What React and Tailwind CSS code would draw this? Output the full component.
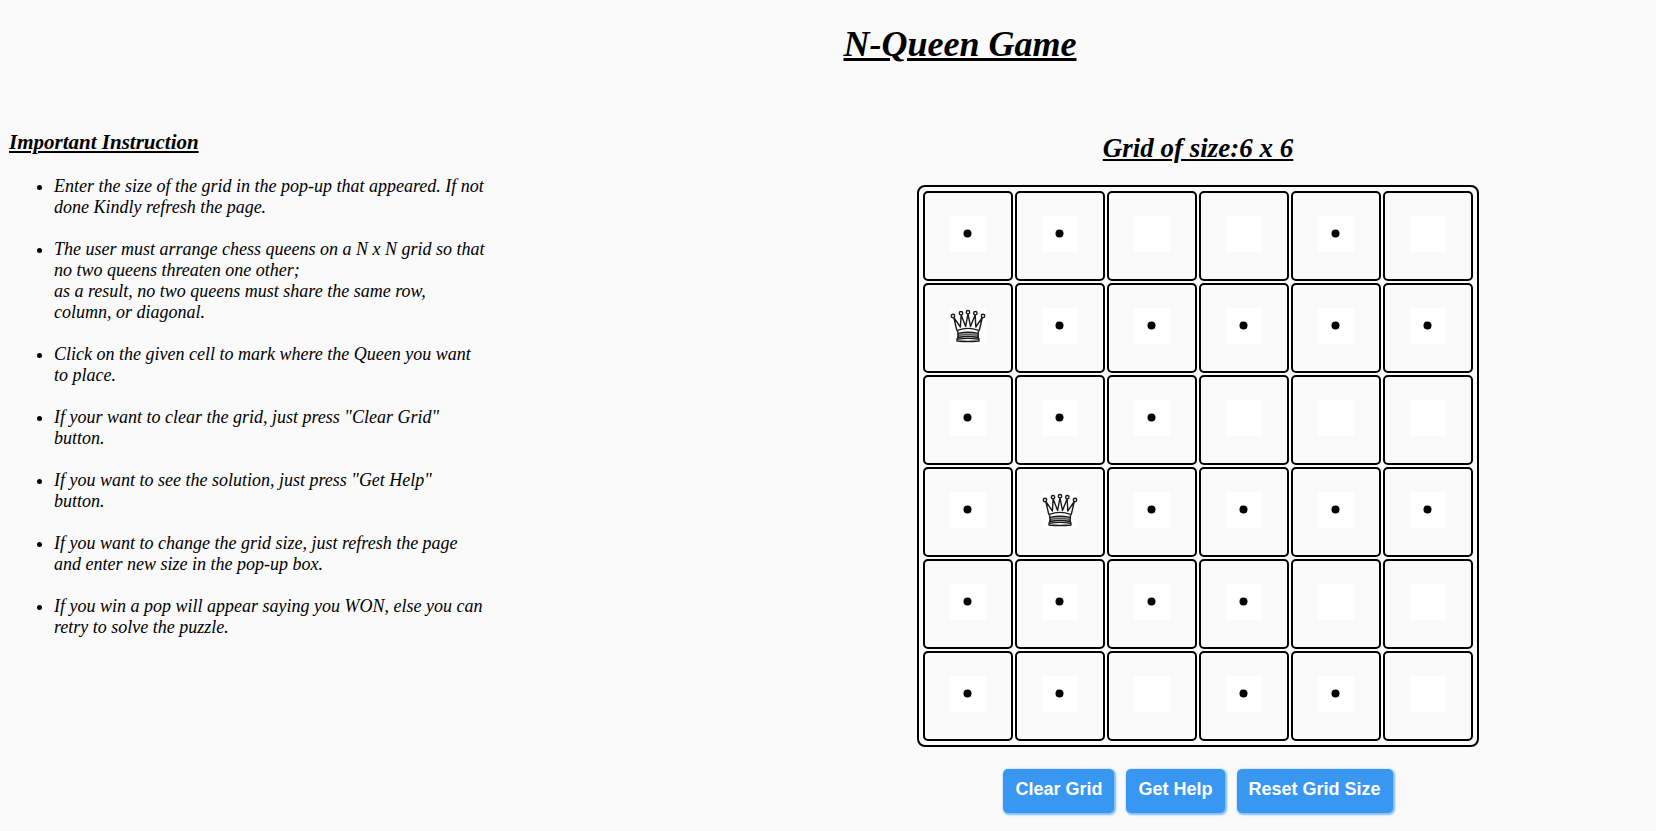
const INSTRUCTIONS = [
  ['Enter the size of the grid in the pop-up that appeared. If not done Kindly refresh the page.'],
  [
    'The user must arrange chess queens on a N x N grid so that no two queens threaten one other;',
    'as a result, no two queens must share the same row, column, or diagonal.',
  ],
  ['Click on the given cell to mark where the Queen you want to place.'],
  ['If your want to clear the grid, just press "Clear Grid" button.'],
  ['If you want to see the solution, just press "Get Help" button.'],
  ['If you want to change the grid size, just refresh the page and enter new size in the pop-up box.'],
  ['If you win a pop will appear saying you WON, else you can retry to solve the puzzle.'],
];

// Q = queen, x = attacked cell, . = free cell
const BOARD = ['xx..x.', 'Qxxxxx', 'xxx...', 'xQxxxx', 'xxxx..', 'xx.xx.'];

const LABELS = { Q: 'queen', x: 'attacked', '.': 'free' };

function Queen() {
  return (
    <svg viewBox="0 0 36 36" className="size-9 overflow-visible" fill="#fff" stroke="#1a1a1a" strokeWidth="1.4" strokeLinejoin="round" aria-hidden="true">
      <path d="M6.6 21.5 3.8 9.5 10.4 19 11.1 6.8 15.6 18.5 18 5.8 20.5 18.5 25.2 6.8 25.8 19 32.3 9.5 29.5 21.5Q28 23.5 28 26L28.200 29.5 29 31V33Q18 34 7 33V31L7.9 29.5 8.2 26Q8 23.5 6.6 21.5Z" />
      <path d="M7.5 22.3Q18 18.5 28.5 22.3" fill="none" />
      <path d="M8.2 25.4Q18 23 28 25.4V29.500Q18 27.5 8.2 29.5Z" fill="#b5b5b5" />
      <path d="M9 27.400Q18 25.400 27.200 27.400" fill="none" stroke="#555" />
      <path d="M7.3 31.2Q18 29.5 28.7 31.2" fill="none" />
      <circle cx="3" cy="8" r="1.7" />
      <circle cx="11" cy="5.2" r="1.7" />
      <circle cx="18" cy="4.2" r="1.7" />
      <circle cx="25.3" cy="5.2" r="1.7" />
      <circle cx="33" cy="8" r="1.7" />
    </svg>
  );
}

function Dot() {
  return (
    <svg viewBox="0 0 36 36" className="size-9" aria-hidden="true">
      <circle cx="17.5" cy="17.5" r="4" fill="#000" />
    </svg>
  );
}

function Cell({ state, row, col }) {
  return (
    <button
      type="button"
      aria-label={`Row ${row + 1}, column ${col + 1}: ${LABELS[state]}`}
      className="flex size-[90px] items-center justify-center rounded-[5px] border-2 border-black pb-1"
    >
      <span className="block size-9 bg-white">
        {state === 'Q' && <Queen />}
        {state === 'x' && <Dot />}
      </span>
    </button>
  );
}

function ActionButton({ children }) {
  return (
    <button
      type="button"
      className="rounded-[5px] bg-[#3897f0] px-3 pt-2 pb-3 font-['Liberation_Sans',Arial,sans-serif] text-[18px] leading-6 font-bold text-white shadow-[1px_1px_2px_1px_#7cbcf8]"
    >
      {children}
    </button>
  );
}

export default function App() {
  return (
    <div className="min-h-screen bg-[#fafafa] font-['Liberation_Serif','Times_New_Roman',serif] text-black">
      <header className="pt-6 pl-[264px] text-center">
        <h1 className="text-4xl font-bold italic underline">N-Queen Game</h1>
      </header>
      <main className="grid grid-cols-[740px_1fr] pt-16">
        <section className="pl-[9px]">
          <h2 className="text-[21px] leading-7 font-bold italic underline">Important Instruction</h2>
          <ul className="mt-5 flex w-[477px] list-disc flex-col gap-[21px] pl-[45px] text-lg leading-[21px] italic">
            {INSTRUCTIONS.map((lines) => (
              <li key={lines[0]}>
                {lines.map((line) => (
                  <span key={line} className="block">{line}</span>
                ))}
              </li>
            ))}
          </ul>
        </section>
        <section className="flex flex-col items-center pt-1">
          <h2 className="text-[27px] leading-8 font-bold italic underline">Grid of size:6 x 6</h2>
          <div className="mt-[21px] grid grid-cols-6 gap-0.5 rounded-lg border-2 border-black p-1">
            {BOARD.map((line, row) =>
              line.split('').map((state, col) => (
                <Cell key={`${row}-${col}`} state={state} row={row} col={col} />
              )),
            )}
          </div>
          <div className="mt-[22px] flex gap-3">
            <ActionButton>Clear Grid</ActionButton>
            <ActionButton>Get Help</ActionButton>
            <ActionButton>Reset Grid Size</ActionButton>
          </div>
        </section>
      </main>
    </div>
  );
}
